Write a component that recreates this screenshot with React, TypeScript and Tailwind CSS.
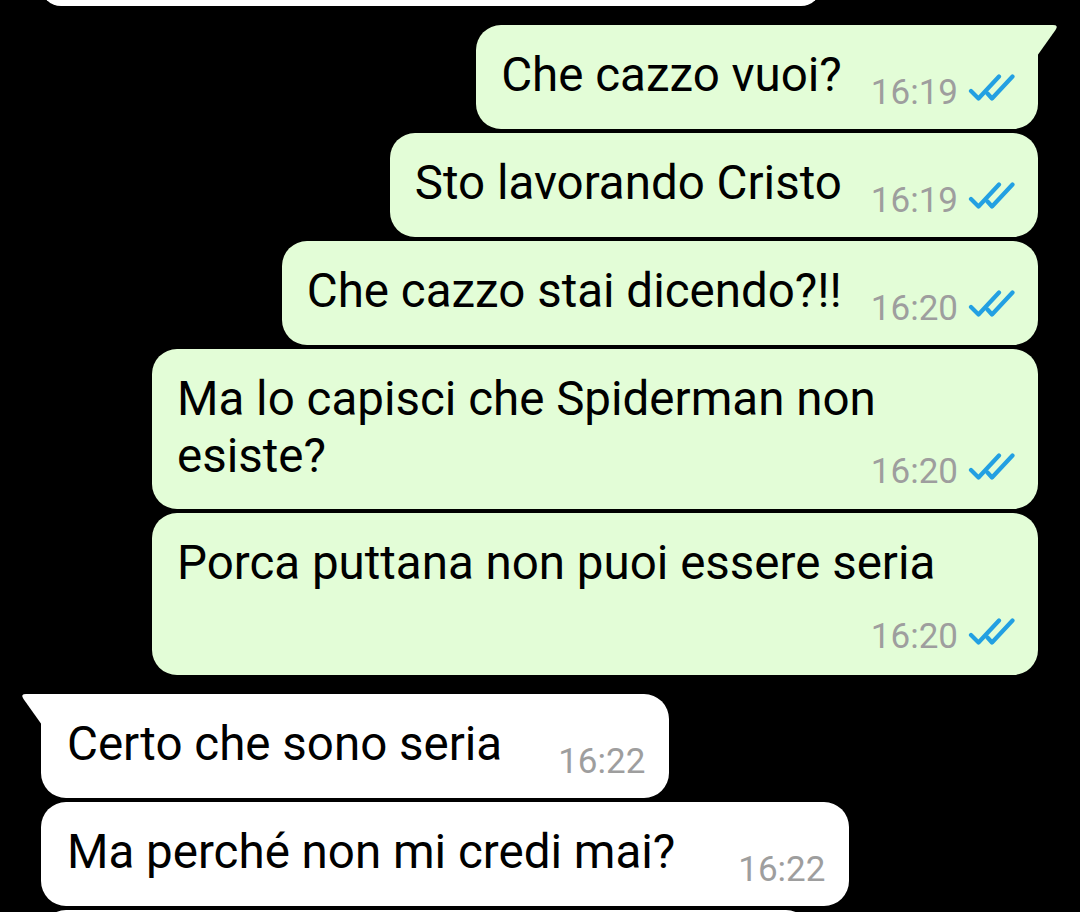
import React from "react";

type Msg = {
  text: string;
  time: string;
  tail?: boolean;
  wide?: "overlap" | "below"; // fixed-width bubbles where time goes on own line
  gap?: string;
};

const outgoing: Msg[] = [
  { text: "Che cazzo vuoi?", time: "16:19", tail: true },
  { text: "Sto lavorando Cristo", time: "16:19" },
  { text: "Che cazzo stai dicendo?!!", time: "16:20" },
  { text: "Ma lo capisci che Spiderman non esiste?", time: "16:20", wide: "overlap" },
  { text: "Porca puttana non puoi essere seria", time: "16:20", wide: "below" },
];

const incoming: Msg[] = [
  { text: "Certo che sono seria", time: "16:22", tail: true, gap: "ml-[56px]" },
  { text: "Ma perché non mi credi mai?", time: "16:22", gap: "ml-[63px]" },
];

function Ticks() {
  return (
    <svg width="47" height="28" viewBox="0 0 47 28" fill="none" className="ml-[10px] mt-[1px] self-start">
      <path d="M3 17 L10.5 24.5 L31 2.5" stroke="#23a0e2" strokeWidth="4.2" strokeLinecap="round" strokeLinejoin="round" />
      <path d="M19.5 19.5 L24 24.5 L44.5 2.5" stroke="#23a0e2" strokeWidth="4.2" strokeLinecap="round" strokeLinejoin="round" />
    </svg>
  );
}

function Time({ time, ticks }: { time: string; ticks?: boolean }) {
  return (
    <div className="flex h-[40px] items-start">
      <span className="text-[35px] leading-[40px] text-[#9e9e9e]">{time}</span>
      {ticks && <Ticks />}
    </div>
  );
}

function Tail({ side, color }: { side: "left" | "right"; color: string }) {
  if (side === "right") {
    return (
      <svg width="22" height="31" viewBox="0 0 22 31" className="absolute top-0 right-[-21px]">
        <path d="M0 0 H16 Q22 0 18.5 5 L0 31 Z" fill={color} />
      </svg>
    );
  }
  return (
    <svg width="22" height="31" viewBox="0 0 22 31" className="absolute top-0 left-[-21px]">
      <path d="M22 0 H6 Q0 0 3.5 5 L22 31 Z" fill={color} />
    </svg>
  );
}

function OutBubble({ m }: { m: Msg }) {
  const bg = "#e3fdd7";
  const corner = m.tail ? "rounded-tr-none" : "";
  if (m.wide === "overlap") {
    return (
      <div className={`relative w-[886px] rounded-[25px] bg-[#e3fdd7] pl-[25px] pr-[23px] pt-[22px] pb-[17px] ${corner}`}>
        <p className="pr-[2px] text-[47.5px] leading-[57px]">{m.text}</p>
        <div className="-mt-[33px] flex justify-end">
          <Time time={m.time} ticks />
        </div>
      </div>
    );
  }
  if (m.wide === "below") {
    return (
      <div className={`relative w-[886px] rounded-[25px] bg-[#e3fdd7] pl-[25px] pr-[23px] pt-[22px] pb-[18px] ${corner}`}>
        <p className="text-[47.5px] leading-[57px]">{m.text}</p>
        <div className="mt-[25px] flex justify-end">
          <Time time={m.time} ticks />
        </div>
      </div>
    );
  }
  return (
    <div className={`relative flex items-end rounded-[25px] bg-[#e3fdd7] pl-[25px] pr-[23px] pt-[22px] pb-[25px] ${corner}`}>
      {m.tail && <Tail side="right" color={bg} />}
      <span className="text-[47.5px] leading-[57px]">{m.text}</span>
      <div className="-mb-[9px] ml-[29px]">
        <Time time={m.time} ticks />
      </div>
    </div>
  );
}

function InBubble({ m }: { m: Msg }) {
  return (
    <div className={`relative flex items-end rounded-[25px] bg-white pl-[26px] pr-[24px] pt-[22px] pb-[25px] ${m.tail ? "rounded-tl-none" : ""}`}>
      {m.tail && <Tail side="left" color="#ffffff" />}
      <span className="text-[47.5px] leading-[57px]">{m.text}</span>
      <div className={`-mb-[9px] ${m.gap}`}>
        <Time time={m.time} />
      </div>
    </div>
  );
}

export default function App() {
  return (
    <div className="h-[912px] w-[1080px] overflow-hidden bg-black font-[Roboto,sans-serif] text-black">
      {/* previous message, cut off */}
      <div className="-mt-[34px] ml-[41px] h-[40px] w-[780px] rounded-[25px] bg-white" />

      <div className="mt-[19px] flex flex-col items-end gap-[4px] pr-[42px]">
        {outgoing.map((m, i) => (
          <OutBubble key={i} m={m} />
        ))}
      </div>

      <div className="mt-[19px] flex flex-col items-start gap-[4px] pl-[41px]">
        {incoming.map((m, i) => (
          <InBubble key={i} m={m} />
        ))}
        {/* next message, cut off */}
        <div className="h-[60px] w-[770px] rounded-[25px] bg-white" />
      </div>
    </div>
  );
}
